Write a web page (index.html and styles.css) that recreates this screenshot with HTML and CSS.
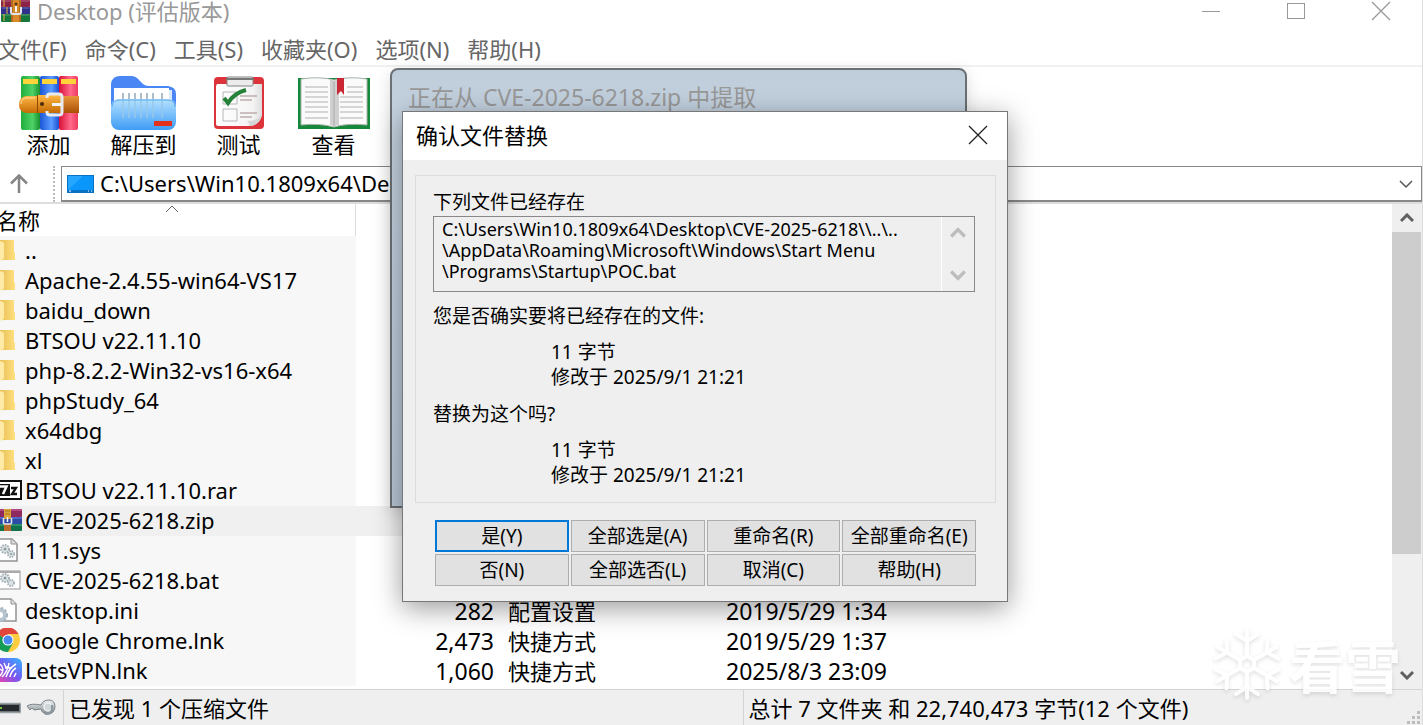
FILE: index.html
```html
<!DOCTYPE html>
<html lang="zh-CN">
<head>
<meta charset="utf-8">
<title>Desktop (评估版本)</title>
<link rel="stylesheet" href="styles.css">
</head>
<body>
<svg width="0" height="0" class="defs" aria-hidden="true">
  <defs>
    <linearGradient id="fold" x1="0" x2="1"><stop offset="0" stop-color="#e8bf55"/><stop offset="1" stop-color="#ffe080"/></linearGradient>
    <linearGradient id="gg" x1="0" x2="1"><stop offset="0" stop-color="#1fae3c"/><stop offset=".6" stop-color="#4fd268"/><stop offset="1" stop-color="#17902f"/></linearGradient>
    <linearGradient id="gb" x1="0" x2="1"><stop offset="0" stop-color="#1b56d8"/><stop offset=".6" stop-color="#5a9cff"/><stop offset="1" stop-color="#1b4fd0"/></linearGradient>
    <linearGradient id="gr" x1="0" x2="1"><stop offset="0" stop-color="#d90f35"/><stop offset=".6" stop-color="#ff6a8c"/><stop offset="1" stop-color="#f03a5e"/></linearGradient>
    <linearGradient id="belt" x1="0" y1="0" x2="0" y2="1"><stop offset="0" stop-color="#ffb845"/><stop offset="1" stop-color="#c56a06"/></linearGradient>
    <linearGradient id="beltdark" x1="0" y1="0" x2="0" y2="1"><stop offset="0" stop-color="#e8953a"/><stop offset="1" stop-color="#a84f04"/></linearGradient>
    <linearGradient id="glass" x1="0" y1="0" x2="0" y2="1"><stop offset="0" stop-color="#b5e2ff"/><stop offset="1" stop-color="#3f9cf5"/></linearGradient>
    <linearGradient id="vpn" x1="1" y1="0" x2="0" y2="1"><stop offset="0" stop-color="#35b6ff"/><stop offset=".5" stop-color="#7357f2"/><stop offset="1" stop-color="#ff3fa0"/></linearGradient>
    <linearGradient id="page" x1="0" x2="1"><stop offset="0" stop-color="#fff"/><stop offset=".8" stop-color="#f4f4f4"/><stop offset="1" stop-color="#ddd"/></linearGradient>
    <linearGradient id="silver" x1="0" y1="0" x2="0" y2="1"><stop offset="0" stop-color="#eef1f2"/><stop offset="1" stop-color="#7f898e"/></linearGradient>
    <symbol id="i-folder" viewBox="0 0 15 24"><path d="M0 2H13a1 1 0 0 1 1 1V14l1 1v7H0z" fill="url(#fold)"/><path d="M0 3l3 1q1 1 1 2v14l-2 3-2-1z" fill="#ffe9a6"/></symbol>
    <symbol id="i-rar" viewBox="0 0 24 24" preserveAspectRatio="none"><rect x="-2" y="1" width="24" height="8" rx="1" fill="#8e2a5f"/><rect x="-2" y="1" width="24" height="2" fill="#b04a80"/><rect x="-2" y="9" width="24" height="7" fill="#2d4aa6"/><rect x="-2" y="9" width="24" height="2" fill="#5068c8"/><rect x="-2" y="16" width="24" height="7" rx="1" fill="#12704d"/><rect x="-2" y="16" width="24" height="2" fill="#2a9268"/><rect x="4" y="16" width="7" height="7" fill="#b86b2d"/><rect x="4" y="1" width="7" height="10" fill="#d9a53a"/><path d="M5 3h5M5 6h5" stroke="#a8741c"/><path d="M3.500 10v5q0 1 1 1h6q1 0 1-1v-5" fill="none" stroke="#dfe5ea" stroke-width="1.600"/><path d="M7.500 9v5" stroke="#f2f4f5" stroke-width="1.500"/></symbol>
    <symbol id="i-rar-app" viewBox="0 0 30 24"><rect x="1" y="0" width="29" height="7" rx="1" fill="#8e2348"/><rect x="1" y="7" width="29" height="7" fill="#30318a"/><rect x="1" y="14" width="29" height="8" rx="1" fill="#16773d"/><path d="M2 1h27M2 8h27M2 15h27" stroke="#fff" stroke-opacity=".3"/><path d="M4 0v7M4 14v7M7 7v7" stroke="#e6b54a"/><rect x="11" y="0" width="10" height="22" fill="#d98a2c"/><path d="M12 0v22M20 0v22" stroke="#8d4e12"/><path d="M11 7v5q0 2 2 2h6q2 0 2-2V7" fill="none" stroke="#dfe5ea" stroke-width="2"/><path d="M16 6v6" stroke="#f2f4f5" stroke-width="2"/><circle cx="16" cy="4" r="1.500" fill="#5a3208"/></symbol>
    <symbol id="i-7z" viewBox="0 0 23 24"><rect x="-3" y="3" width="24" height="18" fill="#fff" stroke="#111" stroke-width="2"/><rect y="6" width="10" height="12" fill="#111"/><path d="M0 8.500h6.500L3 16" fill="none" stroke="#fff" stroke-width="2.500"/><path d="M11 10h5l-4 6h5" fill="none" stroke="#111" stroke-width="2.300"/></symbol>
    <symbol id="i-sys" viewBox="0 0 18 24"><path d="M0 1h12l5 5v17H0" fill="#fff" stroke="#929292" stroke-width="1.500"/><path d="M11 1v5h6" fill="#ddd" stroke="#929292"/><circle cx="5" cy="11" r="4" fill="#dfe6e9" stroke="#a3afb4" stroke-width="2" stroke-dasharray="1.600 1"/><circle cx="5" cy="11" r="1.500" fill="#8b989e"/><circle cx="11" cy="16" r="3" fill="#dfe6e9" stroke="#a3afb4" stroke-width="2" stroke-dasharray="1.400 1"/><circle cx="11" cy="16" r="1" fill="#8b989e"/></symbol>
    <symbol id="i-bat" viewBox="0 0 22 24"><rect x="-2" y="3" width="22" height="18" fill="#fff" stroke="#999"/><path d="M0 4h20" stroke="#aaa" stroke-width="2"/><circle cx="5" cy="10" r="4" fill="#dfe6e9" stroke="#a3afb4" stroke-width="2" stroke-dasharray="1.600 1"/><circle cx="5" cy="10" r="1.500" fill="#8b989e"/><circle cx="11" cy="15" r="3" fill="#dfe6e9" stroke="#a3afb4" stroke-width="2" stroke-dasharray="1.400 1"/></symbol>
    <symbol id="i-ini" viewBox="0 0 18 24"><path d="M0 1h11l5 5v17H0" fill="#fff" stroke="#929292" stroke-width="1.500"/><path d="M11 1v5h5" fill="#ddd" stroke="#929292"/><circle cx="0" cy="17" r="5" fill="none" stroke="#b8c4cd" stroke-width="4"/><circle cx="0" cy="17" r="7" fill="none" stroke="#a5b4bf" stroke-width="2" stroke-dasharray="2.400 1.800"/></symbol>
    <symbol id="i-chrome" viewBox="0 0 21 24"><circle cx="8" cy="12" r="12" fill="#ffcd40"/><path d="M8 12L-3 6A12 12 0 0 1 18.400 6H8z" fill="#e0473a"/><path d="M8 12L-3 6A12 12 0 0 0 8 24L13 15z" fill="#159c57"/><circle cx="8" cy="12" r="5.600" fill="#fff"/><circle cx="8" cy="12" r="4.500" fill="#4a8af4"/></symbol>
    <symbol id="i-vpn" viewBox="0 0 22 24" preserveAspectRatio="none"><rect x="-6" width="28" height="24" rx="6" fill="url(#vpn)"/><path d="M0 6q6 5 0 12M4 5q2 4 2 6M9 5Q8 13 2 19M16 6Q9 10 6 19M16 10Q11 13 10 19M16 15l-2 4M0 11l3 2M11 10l-5-1" fill="none" stroke="#fff" stroke-width="1.500"/></symbol>
    <symbol id="i-up" viewBox="0 0 14 10"><path d="M1 8l6-6 6 6" fill="none" stroke="currentColor" stroke-width="3"/></symbol>
    <symbol id="i-down" viewBox="0 0 14 10"><path d="M1 2l6 6 6-6" fill="none" stroke="currentColor" stroke-width="3"/></symbol>
    <symbol id="i-close" viewBox="0 0 20 20"><path d="M1 1l18 18M19 1L1 19" fill="none" stroke="currentColor" stroke-width="1.300"/></symbol>
  </defs>
</svg>

<div class="window">
  <header class="titlebar">
    <svg class="app-icon"><use href="#i-rar-app" width="30" height="24"/></svg>
    <h1 class="title">Desktop (评估版本)</h1>
    <div class="controls">
      <button class="ctl" aria-label="最小化"><svg width="20" height="20" viewBox="0 0 20 20"><path d="M1 10.500h18" stroke="currentColor"/></svg></button>
      <button class="ctl" aria-label="最大化"><svg width="20" height="20" viewBox="0 0 20 20"><rect x="1.500" y="2.500" width="17" height="15" fill="none" stroke="currentColor"/></svg></button>
      <button class="ctl" aria-label="关闭"><svg width="20" height="20"><use href="#i-close"/></svg></button>
    </div>
  </header>

  <nav class="menu">
    <button>文件(F)</button><button>命令(C)</button><button>工具(S)</button><button>收藏夹(O)</button><button>选项(N)</button><button>帮助(H)</button>
  </nav>

  <div class="toolbar">
    <button class="tool">
      <svg viewBox="0 0 60 56" width="60" height="56"><rect x="2" y="1" width="19" height="54" rx="2" fill="url(#gg)"/><rect x="21" y="1" width="19" height="54" rx="2" fill="url(#gb)"/><rect x="40" y="1" width="19" height="54" rx="2" fill="url(#gr)"/><path d="M4 4h15v5H4zM23 4h15v5H23zM42 4h15v5H42z" fill="#ffd43b"/><path d="M7 21H18V38H7Q0 37 0 29.500T7 21z" fill="url(#belt)"/><path d="M44 21H60V38H44z" fill="url(#beltdark)"/><path d="M18 20H42V38H18z" fill="url(#belt)"/><path d="M18.500 20v18" stroke="#8c4900"/><path d="M2 29q0-6 6-6h8" fill="none" stroke="#ffe1a0"/><circle cx="23" cy="29" r="2" fill="#4d2a08"/><path d="M28 23v-1q0-3 3-3h9q3 0 3 3v15q0 3-3 3h-9q-3 0-3-3v-1" fill="none" stroke="#e6e9ee" stroke-width="3"/><path d="M33 29.500h9" stroke="#f4f5f6" stroke-width="3"/></svg>
      <span>添加</span>
    </button>
    <button class="tool">
      <svg viewBox="0 0 66 56" width="66" height="56"><path d="M0 9Q1 1 9 1H20Q25 1 28 5L32 9Q34 11 38 11H57Q65 12 65 19V45H0z" fill="#4b86f5"/><path d="M3 13H58v32H3z" fill="#fff"/><path d="M58 15h3v28h-3z" fill="#dce9fa"/><path d="M12 18v7M18 18v7M24 18v7M30 18v7M36 18v7M42 18v7M51 18v7" stroke="#aebdcb" stroke-width="2"/><rect y="24" width="65" height="31" rx="8" fill="url(#glass)"/><path d="M12 25v18M18 25v18M24 25v18M30 25v18M36 25v18M42 25v18M51 25v18" stroke="#95c8ea" stroke-width="1.500"/><path d="M1 32q0-7 8-7h47q8 0 8 7" fill="none" stroke="#5aaae8"/><rect x="43" y="46" width="18" height="5" fill="#e5301c"/></svg>
      <span>解压到</span>
    </button>
    <button class="tool">
      <svg viewBox="0 0 52 56" width="52" height="56"><rect x="1" y="2" width="50" height="52" rx="4" fill="#dd343b"/><path d="M4 9H49V40Q47 50 36 51H5q-2 0-2-2V11z" fill="url(#page)"/><path d="M49 40q-5 6-15 6 3 2 2 5 10 0 13-11z" fill="#d7d7d7"/><rect x="14" y="2" width="26" height="9" rx="1" fill="#ececec" stroke="#858585"/><path d="M13 4h28" stroke="#777" stroke-width="2"/><path d="M10 17H24V29H10zM10 34H24V46H10z" fill="none" stroke="#b6b6b6"/><path d="M11 23l4 5Q21 18 33 15" fill="none" stroke="#258137" stroke-width="4"/><path d="M27 21h17M27 25h12M27 38h17M27 42h12" stroke="#bdadae" stroke-width="1.500"/></svg>
      <span>测试</span>
    </button>
    <button class="tool">
      <svg viewBox="0 0 74 56" width="74" height="56"><path d="M1 3h72v51H1z" fill="#16883b"/><path d="M4 4Q23 1 37 5Q52 1 70 4V50Q50 48 37 52Q22 48 4 50z" fill="#fafafa" stroke="#a8b5aa"/><path d="M33 4q3 0 4 3 1-3 5-3V50q-4 0-5 2-1-2-4-2z" fill="#d0d0d0"/><path d="M37 6v45" stroke="#aaa"/><path d="M8 12h23M8 17h23M8 22h23M8 27h23M8 32h23M8 37h23M8 43h23M50 12h16M50 17h16M43 22h23M43 27h23M43 32h23M43 37h23M43 43h23" stroke="#b0b0b0"/><path d="M40 3h7v17l-3-4-4 4z" fill="#c92834"/></svg>
      <span>查看</span>
    </button>
  </div>

  <div class="address-row">
    <button class="go-up" aria-label="上一级"><svg width="20" height="20" viewBox="0 0 20 20"><path d="M10 19V2M2 9.500l8-8 8 8" fill="none" stroke="#858585" stroke-width="2.500"/></svg></button>
    <span class="grip"></span>
    <div class="combo">
      <svg width="27" height="18" viewBox="0 0 27 18"><rect width="27" height="18" fill="#0873c4"/><rect x="1" y="1" width="25" height="14" fill="#0a96fa"/><path d="M1 15L16 1h-15z" fill="#27a6ff"/><path d="M2 16h2M21 16h1M24 16h1" stroke="#fff"/></svg>
      <input class="path" aria-label="路径" value="C:\Users\Win10.1809x64\Desktop">
      <button class="drop" aria-label="展开"><svg width="14" height="10" viewBox="0 0 14 10"><path d="M1 2l6 6 6-6" fill="none" stroke="#555" stroke-width="1.500"/></svg></button>
    </div>
  </div>

  <main class="files">
    <table class="list">
      <colgroup><col class="c-name"><col class="c-size"><col class="c-type"><col class="c-date"></colgroup>
      <thead><tr><th scope="col"><div class="name-head">名称<svg class="sort" width="14" height="8" viewBox="0 0 14 8"><path d="M1 7l6-6 6 6" fill="none" stroke="#666"/></svg></div></th><th></th><th></th><th></th></tr></thead>
      <tbody>
        <tr><td><div class="cell"><svg><use href="#i-folder" width="15" height="24"/></svg>..</div></td><td></td><td></td><td></td></tr>
        <tr><td><div class="cell"><svg><use href="#i-folder" width="15" height="24"/></svg>Apache-2.4.55-win64-VS17</div></td><td></td><td></td><td></td></tr>
        <tr><td><div class="cell"><svg><use href="#i-folder" width="15" height="24"/></svg>baidu_down</div></td><td></td><td></td><td></td></tr>
        <tr><td><div class="cell"><svg><use href="#i-folder" width="15" height="24"/></svg>BTSOU v22.11.10</div></td><td></td><td></td><td></td></tr>
        <tr><td><div class="cell"><svg><use href="#i-folder" width="15" height="24"/></svg>php-8.2.2-Win32-vs16-x64</div></td><td></td><td></td><td></td></tr>
        <tr><td><div class="cell"><svg><use href="#i-folder" width="15" height="24"/></svg>phpStudy_64</div></td><td></td><td></td><td></td></tr>
        <tr><td><div class="cell"><svg><use href="#i-folder" width="15" height="24"/></svg>x64dbg</div></td><td></td><td></td><td></td></tr>
        <tr><td><div class="cell"><svg><use href="#i-folder" width="15" height="24"/></svg>xl</div></td><td></td><td></td><td></td></tr>
        <tr><td><div class="cell"><svg><use href="#i-7z" width="23" height="24"/></svg>BTSOU v22.11.10.rar</div></td><td></td><td></td><td></td></tr>
        <tr class="selected"><td><div class="cell"><svg><use href="#i-rar" width="24" height="24"/></svg>CVE-2025-6218.zip</div></td><td></td><td></td><td></td></tr>
        <tr><td><div class="cell"><svg><use href="#i-sys" width="18" height="24"/></svg>111.sys</div></td><td></td><td></td><td></td></tr>
        <tr><td><div class="cell"><svg><use href="#i-bat" width="22" height="24"/></svg>CVE-2025-6218.bat</div></td><td></td><td></td><td></td></tr>
        <tr><td><div class="cell"><svg><use href="#i-ini" width="18" height="24"/></svg>desktop.ini</div></td><td>282</td><td>配置设置</td><td>2019/5/29 1:34</td></tr>
        <tr><td><div class="cell"><svg><use href="#i-chrome" width="21" height="24"/></svg>Google Chrome.lnk</div></td><td>2,473</td><td>快捷方式</td><td>2019/5/29 1:37</td></tr>
        <tr><td><div class="cell"><svg><use href="#i-vpn" width="22" height="24"/></svg>LetsVPN.lnk</div></td><td>1,060</td><td>快捷方式</td><td>2025/8/3 23:09</td></tr>
      </tbody>
    </table>
    <div class="scrollbar">
      <button aria-label="向上滚动"><svg width="14" height="10"><use href="#i-up"/></svg></button>
      <div class="track"><div class="thumb"></div></div>
      <button aria-label="向下滚动"><svg width="14" height="10"><use href="#i-down"/></svg></button>
    </div>
  </main>

  <footer class="status">
    <div class="st-icons">
      <svg width="21" height="12" viewBox="0 0 21 12"><rect x="-2" y="1" width="23" height="10" fill="#70787d" stroke="#c3c9cc"/><rect y="3" width="19" height="6" fill="#25292c"/><path d="M0 6h2" stroke="#6ec83c" stroke-width="2"/></svg>
      <svg width="30" height="17" viewBox="0 0 30 17"><path d="M1 7Q5 4 15 6Q17 1 23 1T29 8Q28 15 22 15T15 10L8 11 6 9 4 11z" fill="url(#silver)" stroke="#7b8488"/><circle cx="22" cy="8" r="4" fill="#cfd7da" stroke="#eef1f2" stroke-width="1.500"/><path d="M19 15q8 1 7-9" fill="none" stroke="#8c979c" stroke-width="2"/></svg>
    </div>
    <div class="st-left">已发现 1 个压缩文件</div>
    <div class="st-right">总计 7 文件夹 和 22,740,473 字节(12 个文件)</div>
    <svg class="resize" width="14" height="13" viewBox="0 0 14 13"><path d="M10 0h3v3h-3zM5 5h3v3h-3zM10 5h3v3h-3zM0 10h3v3h-3zM5 10h3v3h-3zM10 10h3v3h-3z" fill="#bdbdbd"/></svg>
  </footer>
</div>

<section class="progress-window"><h2>正在从 CVE-2025-6218.zip 中提取</h2></section>

<section class="dialog" role="dialog" aria-labelledby="dlg-title">
  <header class="dlg-head">
    <h2 id="dlg-title">确认文件替换</h2>
    <button class="dlg-close" aria-label="关闭"><svg width="20" height="20"><use href="#i-close"/></svg></button>
  </header>
  <div class="dlg-body">
    <div class="group">
      <label for="target">下列文件已经存在</label>
      <div class="pathbox">
        <textarea id="target" readonly>C:\Users\Win10.1809x64\Desktop\CVE-2025-6218\\..\..
\AppData\Roaming\Microsoft\Windows\Start Menu
\Programs\Startup\POC.bat</textarea>
        <div class="mini-scroll"><svg width="16" height="12"><use href="#i-up"/></svg><svg width="16" height="12"><use href="#i-down"/></svg></div>
      </div>
      <p>您是否确实要将已经存在的文件:</p>
      <div class="info"><p>11 字节</p><p>修改于 2025/9/1 21:21</p></div>
      <p>替换为这个吗?</p>
      <div class="info"><p>11 字节</p><p>修改于 2025/9/1 21:21</p></div>
    </div>
    <div class="actions">
      <button class="default">是(Y)</button><button>全部选是(A)</button><button>重命名(R)</button><button>全部重命名(E)</button>
      <button>否(N)</button><button>全部选否(L)</button><button>取消(C)</button><button>帮助(H)</button>
    </div>
  </div>
</section>

<div class="watermark">
  <svg width="68" height="74" viewBox="-34 -37 68 74"><g fill="none" stroke="#fff" stroke-width="4" stroke-linecap="round" stroke-linejoin="round"><path d="M0-8L7-4V4L0 8-7 4V-4z"/><g id="arm"><path d="M0-8V-34M-11-30L0-23 11-30"/></g><use href="#arm" transform="rotate(60)"/><use href="#arm" transform="rotate(120)"/><use href="#arm" transform="rotate(180)"/><use href="#arm" transform="rotate(240)"/><use href="#arm" transform="rotate(300)"/></g></svg>
  <span>看雪</span>
</div>
</body>
</html>
```
FILE: styles.css
```css
* { box-sizing: border-box; }

body {
  margin: 0;
  height: 100vh;
  overflow: hidden;
  position: relative;
  background: #fff;
  color: #000;
  font: 22px/30px "Noto Sans", "Noto Sans CJK SC", sans-serif;
}

.defs { position: absolute; }

h1, h2, p { margin: 0; font-weight: 400; }

button {
  margin: 0;
  padding: 0;
  border: 0;
  background: none;
  color: inherit;
  font: inherit;
}

svg { display: block; flex: none; }

.window {
  height: 100%;
  display: flex;
  flex-direction: column;
  border-right: 1px solid #ddd;
}

/* Title bar and menu */
.titlebar {
  height: 22px;
  display: flex;
  align-items: center;
  color: #999;
}
.app-icon { width: 30px; height: 22px; }
.title { margin-left: 7px; flex: 1; font-size: 22px; line-height: 20px; }
.controls { display: flex; gap: 65px; padding-right: 31px; }
.ctl { width: 20px; height: 20px; }

.menu {
  height: 45px;
  display: flex;
  align-items: center;
  gap: 18px;
  margin-left: -2px;
  padding-top: 10px;
  border-bottom: 2px solid #f1f1f1;
  color: #666;
}

/* Toolbar */
.toolbar {
  display: flex;
  padding: 8px 0 0 1px;
}
.tool {
  width: 95px;
  height: 91px;
  display: flex;
  flex-direction: column;
  align-items: center;
}
.tool span { line-height: 26px; }

/* Address bar */
.address-row {
  height: 38px;
  display: flex;
  border-bottom: 2px solid #ddd;
}
.go-up { width: 38px; display: flex; align-items: center; justify-content: center; }
.grip { width: 2px; margin: 0 6px 0 15px; border-left: 2px dotted #bbb; }
.combo {
  flex: 1;
  min-width: 0;
  display: flex;
  align-items: center;
  padding: 0 8px 0 5px;
  border: 1px solid #888;
  border-bottom-width: 2px;
}
.path {
  flex: 1;
  min-width: 0;
  padding: 0 6px 2px;
  border: 0;
  outline: 0;
  background: none;
  font: inherit;
}

/* File list */
.files { flex: 1; min-height: 0; display: flex; overflow: hidden; }
.list {
  flex: 1;
  table-layout: fixed;
  border-collapse: collapse;
  align-self: flex-start;
}
.c-name { width: 356px; }
.c-size { width: 138px; }
.c-type { width: 218px; }
.list th, .list td {
  height: 30px;
  padding: 0;
  font-weight: 400;
  line-height: 30px;
  text-align: left;
  vertical-align: top;
  white-space: nowrap;
}
.list th { height: 32px; }
.name-head {
  position: relative;
  height: 32px;
  border-right: 1px solid #ddd;
  line-height: 32px;
  text-indent: -4px;
}
.sort { position: absolute; left: 165px; top: 1px; }
.list td { padding-left: 14px; }
.list td:first-child { padding: 0; background: #f7f7f7; }
.list td:nth-child(2) { padding: 0; text-align: right; }
.list td:nth-child(2), .list td:nth-child(4) { font-size: 23px; }
.list tr.selected td:first-child, .list tr.selected td:nth-child(2) { background: #f0f0f0; }
.cell { height: 30px; display: flex; align-items: center; padding-bottom: 2px; }
.cell svg { width: 25px; height: 24px; }

.scrollbar {
  width: 30px;
  display: flex;
  flex-direction: column;
  background: #efefef;
  color: #606060;
}
.scrollbar button {
  height: 28px;
  display: flex;
  align-items: center;
  justify-content: center;
}
.track { flex: 1; padding-right: 1px; }
.thumb { height: 75%; background: #cdcdcd; }

/* Status bar */
.status {
  height: 36px;
  display: flex;
  align-items: stretch;
  border-top: 1px solid #d4d4d4;
  background: #efefef;
  line-height: 36px;
}
.st-icons {
  flex: none;
  width: 64px;
  display: flex;
  align-items: center;
  gap: 5px;
  border-right: 1px solid #d4d4d4;
}
.st-left { flex: 1; padding-left: 5px; border-right: 1px solid #d4d4d4; }
.st-right { flex: 1; padding-left: 5px; }
.resize { align-self: flex-end; margin: 0 1px 1px 0; }
.st-left, .st-right { min-width: 0; flex-basis: 0; }
.st-right { flex-grow: 1; margin-right: -15px; }

/* Extraction window behind the dialog */
.progress-window {
  position: absolute;
  left: 390px;
  top: 68px;
  width: 577px;
  height: 440px;
  padding: 13px 16px;
  border: 2px solid #6b7075;
  border-radius: 8px 8px 0 0;
  background: linear-gradient(#bfcddb, #c8d6e4 60px, #bccada);
  box-shadow: 0 4px 16px rgba(0, 0, 0, .15);
  color: #999;
}
.progress-window h2 { font-size: 23px; line-height: 28px; }

/* Confirmation dialog */
.dialog {
  position: absolute;
  left: 402px;
  top: 111px;
  width: 606px;
  border: 1px solid #777;
  background: #efefef;
  box-shadow: 0 6px 26px rgba(0, 0, 0, .4);
  font-size: 19px;
  line-height: 25px;
}
.dlg-head {
  height: 48px;
  display: flex;
  align-items: center;
  justify-content: space-between;
  padding: 0 19px 2px 13px;
  background: #fff;
}
.dlg-head h2 { font-size: 22px; }
.dlg-close { color: #222; }
.dlg-body { padding: 15px 11px 15px 12px; }
.group {
  padding: 14px 20px 14px 17px;
  border: 1px solid #dcdcdc;
}
.group label { display: block; }
.pathbox {
  height: 76px;
  display: flex;
  margin: 1px 0 12px;
  border: 1px solid #888;
  background: #efefef;
}
.pathbox textarea {
  flex: 1;
  min-width: 0;
  padding: 2px 0 0 8px;
  border: 0;
  outline: 0;
  resize: none;
  overflow: hidden;
  background: none;
  white-space: pre;
  color: inherit;
  font: inherit;
  font-size: 18px;
  line-height: 21px;
}
.mini-scroll {
  width: 33px;
  display: flex;
  flex-direction: column;
  align-items: center;
  justify-content: space-between;
  padding: 10px 0;
  border-left: 1px solid #fff;
  color: #bdbdbd;
}
.info { padding: 11px 0 12px 118px; }
.info:last-child { padding-bottom: 0; }
.actions {
  display: grid;
  grid-template-columns: repeat(4, 1fr);
  gap: 2px;
  padding: 17px 20px 0 20px;
}
.actions button {
  height: 32px;
  border: 1px solid #adadad;
  background: #e1e1e1;
  white-space: nowrap;
}
.actions .default { border: 2px solid #0078d7; }

/* Brand mark in the lower right corner */
.watermark {
  position: absolute;
  right: 22px;
  bottom: 24px;
  display: flex;
  align-items: center;
  gap: 8px;
  color: #fff;
  font: bold 56px/68px "Noto Sans CJK SC", sans-serif;
  filter: drop-shadow(0 2px 2px rgba(0, 0, 0, .14));
  opacity: .85;
  pointer-events: none;
}
```
